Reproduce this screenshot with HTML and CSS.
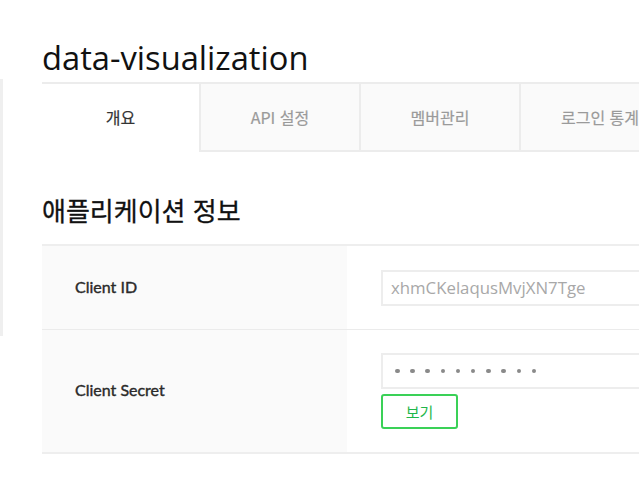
FILE: index.html
```html
<!DOCTYPE html>
<html lang="ko">
<head>
<meta charset="utf-8">
<link rel="stylesheet" href="styles.css">
</head>
<body>
<div class="page">
  <aside class="side-edge"></aside>
  <main class="main">
    <h1 class="app-title">data-visualization</h1>
    <ul class="tabs">
      <li class="tab active">개요</li>
      <li class="tab">API 설정</li>
      <li class="tab">멤버관리</li>
      <li class="tab">로그인 통계</li>
    </ul>
    <h2 class="section-title">애플리케이션 정보</h2>
    <div class="info-table">
      <div class="row row-id">
        <div class="label">Client ID</div>
        <div class="value">
          <div class="field">xhmCKelaqusMvjXN7Tge</div>
        </div>
      </div>
      <div class="row row-secret">
        <div class="label">Client Secret</div>
        <div class="value">
          <div class="field dots">
            <span></span><span></span><span></span><span></span><span></span><span></span><span></span><span></span><span></span><span></span>
          </div>
          <button class="btn-view" type="button">보기</button>
        </div>
      </div>
    </div>
  </main>
</div>
</body>
</html>
```

FILE: styles.css
```css
html, body {
  margin: 0;
  padding: 0;
  overflow: hidden;
  background: #fff;
}
body {
  font-family: "Noto Sans CJK KR", "Open Sans", sans-serif;
  color: #222;
}
.page {
  display: flex;
  align-items: flex-start;
  width: 900px;
}
.side-edge {
  flex: 0 0 3px;
  height: 257px;
  margin-top: 79px;
  background: #efefef;
}
.main {
  flex: 1;
  padding-left: 39px;
}
.app-title {
  margin: 0;
  padding-top: 34px;
  font-family: "Open Sans", "Noto Sans CJK KR", sans-serif;
  font-weight: 400;
  font-size: 32.7px;
  line-height: 48px;
  color: #111;
}
.tabs {
  list-style: none;
  margin: 0;
  padding: 0;
  display: flex;
  border-top: 2px solid #ececec;
}
.tab {
  width: 158px;
  height: 66px;
  display: flex;
  align-items: center;
  justify-content: center;
  font-size: 16px;
  font-weight: 400;
  -webkit-text-stroke: 0.2px currentColor;
  color: #9a9a9a;
  background: #fafafa;
  border-left: 2px solid #ececec;
  border-bottom: 2px solid #ececec;
}
.tab.active {
  width: 157px;
  border-left: 0;
  border-bottom: 2px solid transparent;
  background: #fff;
  color: #333;
}
.section-title {
  margin: 0;
  padding-top: 40px;
  height: 52px;
  font-size: 26px;
  font-weight: 400;
  -webkit-text-stroke: 0.3px #111;
  line-height: 36px;
  color: #111;
}
.info-table {
  border-top: 2px solid #eeeeee;
  border-bottom: 2px solid #eeeeee;
  width: 800px;
}
.row {
  display: flex;
}
.row + .row {
  border-top: 1px solid #ebebeb;
}
.row-id {
  height: 83px;
}
.row-secret {
  height: 122px;
}
.label {
  width: 272px;
  padding-left: 33px;
  padding-bottom: 3px;
  background: #fafafa;
  display: flex;
  align-items: center;
  font-family: "Lato", sans-serif;
  font-weight: 400;
  -webkit-text-stroke: 0.4px #2a2a2a;
  font-size: 16px;
  color: #2a2a2a;
}
.value {
  flex: 1;
  padding-left: 34px;
  display: flex;
  flex-direction: column;
  justify-content: center;
  gap: 5px;
}
.field {
  box-sizing: border-box;
  width: 400px;
  height: 36px;
  border: 2px solid #ededed;
  padding-left: 8px;
  display: flex;
  align-items: center;
  font-family: "Open Sans", sans-serif;
  font-size: 16.8px;
  color: #a8a8a8;
}
.dots {
  gap: 10.7px;
  padding-left: 12px;
}
.dots span {
  width: 4.5px;
  height: 4.5px;
  border-radius: 50%;
  background: #8a8a8a;
}
.btn-view {
  box-sizing: border-box;
  width: 77px;
  height: 35px;
  border: 2px solid #3ad157;
  border-radius: 3px;
  background: #fff;
  color: #1fb64a;
  font-family: "Noto Sans CJK KR", sans-serif;
  font-size: 15px;
  padding: 0;
}
```
